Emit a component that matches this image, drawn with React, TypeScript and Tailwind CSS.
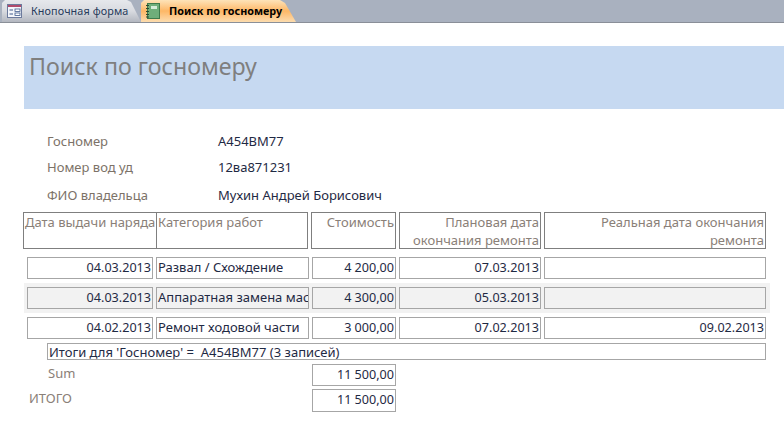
const font = "font-['Noto_Sans',sans-serif]";

function FormIcon() {
  return (
    <svg width="16" height="16" viewBox="0 0 16 16" className="shrink-0">
      <rect x="0.5" y="1.5" width="14" height="13" fill="#f4f6fb" stroke="#6c7a9c" />
      <rect x="1" y="2" width="13" height="2" fill="#b04a6c" />
      <path d="M2.5 7H6M2.5 11H6" stroke="#3f5a8c" strokeWidth="1.2" />
      <rect x="8" y="6" width="5" height="2.4" fill="#fff" stroke="#3f5a8c" strokeWidth="0.8" />
      <rect x="8" y="10" width="5" height="2.4" fill="#fff" stroke="#3f5a8c" strokeWidth="0.8" />
    </svg>
  );
}

function BookIcon() {
  return (
    <svg width="14" height="16" viewBox="0 0 14 16" className="shrink-0">
      <rect x="1.5" y="0.5" width="12" height="15" fill="#6fae7a" stroke="#3f7a4c" />
      <rect x="5" y="3" width="6" height="3" fill="#d6ecd9" />
      <path d="M0 2.5H3M0 5.5H3M0 8.5H3M0 11.5H3M0 14H3" stroke="#2a4a30" strokeWidth="1" />
    </svg>
  );
}

function Tabs() {
  return (
    <div className="flex h-[23px] border-b border-b-[#8a8f98] bg-[#a9b1bf] pl-[2px]">
      <div className="flex w-[139px] items-center gap-[8px] bg-gradient-to-b from-[#e6e8ec] via-[#d9dbe0] to-[#b3b7c0] pl-[5px] text-[10.8px] tracking-[0.1px] text-[#263a5a] [clip-path:polygon(0_3px,3px_0,125px_0,129px_2px,139px_100%,0_100%)]">
        <FormIcon />
        <span>Кнопочная форма</span>
      </div>
      <div className="flex w-[155px] items-center gap-[9px] bg-gradient-to-b from-[#fde3b8] via-[#fdb765] to-[#fcdcae] pl-[5px] text-[10.8px] font-bold text-black [clip-path:polygon(0_3px,3px_0,139px_0,144px_3px,155px_100%,0_100%)]">
        <BookIcon />
        <span>Поиск по госномеру</span>
      </div>
    </div>
  );
}

function Field({ label, value, mt }: { label: string; value: string; mt: string }) {
  return (
    <div className={`flex h-[17px] items-center pl-[47px] text-[13px] ${mt}`}>
      <span className="w-[171px] text-[#7c7268]">{label}</span>
      <span className="text-[#1f2a44]">{value}</span>
    </div>
  );
}

function Head({ w, right, children }: { w: string; right?: boolean; children: React.ReactNode }) {
  return (
    <div className={`h-[37px] shrink-0 overflow-hidden border border-[#7f7f7f] px-px text-[13px] leading-[18px] text-[#8a8078] ${w} ${right ? "text-right" : ""}`}>
      {children}
    </div>
  );
}

function Cell({ w, right, children, shade }: { w: string; right?: boolean; shade?: boolean; children?: React.ReactNode }) {
  return (
    <div className={`flex h-[22px] shrink-0 items-center overflow-hidden whitespace-nowrap border border-[#a6a6a6] px-px text-[#1f2a44] ${w} ${right ? "justify-end text-[12.6px]" : "text-[13px]"} ${shade ? "bg-[#f2f2f2]" : "bg-white"}`}>
      {children}
    </div>
  );
}

function Row({ d, c, s, p, r, shade }: { d: string; c: string; s: string; p: string; r?: string; shade?: boolean }) {
  return (
    <div className="flex">
      <Cell w="w-[126px]" right shade={shade}>{d}</Cell>
      <div className="w-[3px] shrink-0" />
      <Cell w="w-[153px]" shade={shade}>{c}</Cell>
      <div className="w-[3px] shrink-0" />
      <Cell w="w-[84px]" right shade={shade}>{s}</Cell>
      <div className="w-[3px] shrink-0" />
      <Cell w="w-[142px]" right shade={shade}>{p}</Cell>
      <div className="w-[3px] shrink-0" />
      <Cell w="w-[222px]" right shade={shade}>{r}</Cell>
    </div>
  );
}

export default function App() {
  return (
    <div className={`${font} h-[422px] w-[784px] overflow-hidden bg-white`}>
      <Tabs />
      <div className="ml-[24px] mt-[23px] h-[63px] bg-[#c6d9f1] pl-[5px] pt-[3px] text-[23.2px] leading-[34px] text-[#7f7f7f]">
        Поиск по госномеру
      </div>
      <Field label="Госномер" value="А454ВМ77" mt="mt-[24px]" />
      <Field label="Номер вод уд" value="12ва871231" mt="mt-[9px]" />
      <Field label="ФИО владельца" value="Мухин Андрей Борисович" mt="mt-[11px]" />
      <div className="ml-[23px] mt-[8px] flex">
        <Head w="w-[134px]"><span className="whitespace-nowrap">Дата выдачи наряда</span></Head>
        <Head w="w-[152px] -ml-px">Категория работ</Head>
        <Head w="w-[85px] ml-[3px]" right>Стоимость</Head>
        <Head w="w-[142px] ml-[3px]" right>Плановая дата<br />окончания ремонта</Head>
        <Head w="w-[222px] ml-[3px]" right>Реальная дата окончания<br />ремонта</Head>
      </div>
      <div className="ml-[27px] mt-[8px]">
        <Row d="04.03.2013" c="Развал / Схождение" s="4 200,00" p="07.03.2013" />
      </div>
      <div className="ml-[24px] mt-[4px] w-[746px] bg-[#f2f2f2] py-[4px] pl-[3px]">
        <Row shade d="04.03.2013" c="Аппаратная замена мас" s="4 300,00" p="05.03.2013" />
      </div>
      <div className="ml-[27px] mt-[4px]">
        <Row d="04.02.2013" c="Ремонт ходовой части" s="3 000,00" p="07.02.2013" r="09.02.2013" />
      </div>
      <div className="ml-[47px] mt-[4px] h-[17px] w-[719px] overflow-hidden whitespace-pre border border-[#a6a6a6] pl-[1px] text-[13px] leading-[16px] text-[#1f2a44]">
        Итоги для 'Госномер' =  А454ВМ77 (3 записей)
      </div>
      <div className="mt-[4px] flex h-[22px]">
        <span className="w-[312px] pl-[48px] text-[13px] leading-[18px] text-[#8a8078]">Sum</span>
        <Cell w="w-[84px]" right>11 500,00</Cell>
      </div>
      <div className="mt-[3px] flex h-[23px]">
        <span className="w-[312px] pl-[29px] text-[13px] leading-[18px] text-[#8a8078]">ИТОГО</span>
        <Cell w="w-[84px] h-[23px]" right>11 500,00</Cell>
      </div>
    </div>
  );
}
